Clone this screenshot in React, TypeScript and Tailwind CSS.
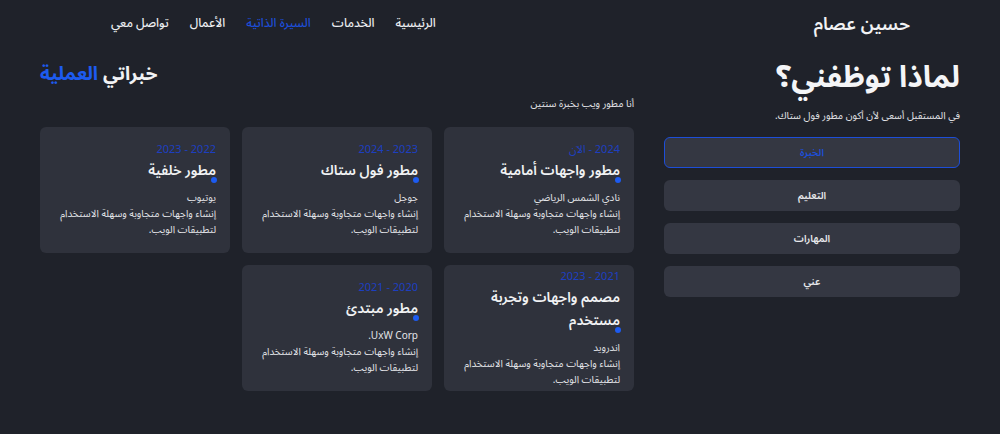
const nav = [
  { label: 'الرئيسية', active: false },
  { label: 'الخدمات', active: false },
  { label: 'السيرة الذاتية', active: true },
  { label: 'الأعمال', active: false },
  { label: 'تواصل معي', active: false },
]

const tabs = ['الخبرة', 'التعليم', 'المهارات', 'عني']

const jobs = [
  { date: '2024 - الآن', title: 'مطور واجهات أمامية', company: 'نادي الشمس الرياضي' },
  { date: '2023 - 2024', title: 'مطور فول ستاك', company: 'جوجل' },
  { date: '2022 - 2023', title: 'مطور خلفية', company: 'يوتيوب' },
  { date: '2021 - 2023', title: 'مصمم واجهات وتجربة مستخدم', company: 'اندرويد' },
  { date: '2020 - 2021', title: 'مطور مبتدئ', company: 'UxW Corp.' },
]

function JobCard({ date, title, company }: { date: string; title: string; company: string }) {
  return (
    <div className="flex h-[126px] flex-col justify-center rounded-md bg-[#2f323c] pl-[8px] pr-[14px]">
      <p className="text-[11px] leading-[12px] text-[#1d3fc0]">{date}</p>
      <h3 className="relative mt-[3px] w-fit max-w-[136px] text-[14px] font-semibold leading-[23px] text-[#f1f2f4]">
        {title}
        <span className="absolute -bottom-[2px] -right-[1px] h-[6px] w-[6px] rounded-full bg-[#1d5bf0]" />
      </h3>
      <div className="mt-[8px] text-[10px] leading-[16px] text-[#e3e4e8]">
        <p>{company}</p>
        <p>إنشاء واجهات متجاوبة وسهلة الاستخدام لتطبيقات الويب.</p>
      </div>
    </div>
  )
}

export default function App() {
  return (
    <div
      dir="rtl"
      className="min-h-screen bg-[#1f222a] text-white"
      style={{ fontFamily: '"Noto Sans", "Noto Sans Arabic", "DejaVu Sans", sans-serif' }}
    >
      <header className="flex h-[46px] items-center justify-between pl-[111px] pr-[90px]">
        <span className="text-[18px] font-semibold text-[#f1f2f4]">حسين عصام</span>
        <nav className="flex items-center gap-[21px] text-[12px] font-medium">
          {nav.map((item) => (
            <a key={item.label} className={item.active ? 'text-[#1d4ed8]' : 'text-[#eceef1]'}>
              {item.label}
            </a>
          ))}
        </nav>
      </header>

      <div className="flex gap-[30px] px-[40px] pt-[10px]">
        <aside className="w-[296px] shrink-0">
          <h2 className="text-[30px] font-bold leading-[40px] text-[#f4f5f7]">لماذا توظفني؟</h2>
          <p className="mt-[11px] text-[10px] leading-[16px] text-[#e3e4e8]">
            في المستقبل أسعى لأن أكون مطور فول ستاك.
          </p>
          <div className="mt-[14px] flex flex-col gap-[12px]">
            {tabs.map((tab, i) => (
              <button
                key={tab}
                type="button"
                className={`h-[31px] rounded-md text-[10px] font-semibold ${
                  i === 0
                    ? 'border border-[#1d4ed8] bg-[#343742] text-[#1d4ed8]'
                    : 'bg-[#343742] text-[#e8e9ec]'
                }`}
              >
                {tab}
              </button>
            ))}
          </div>
        </aside>

        <main className="flex-1">
          <h2 className="pt-[4px] text-left text-[19px] font-bold leading-[26px] text-[#f1f2f4]">
            خبراتي <span className="text-[#1d5bf0]">العملية</span>
          </h2>
          <p className="mt-[10px] text-[10px] leading-[14px] text-[#e3e4e8]">أنا مطور ويب بخبرة سنتين</p>
          <div className="mt-[17px] grid grid-cols-3 gap-[12px]">
            {jobs.map((job) => (
              <JobCard key={job.title} {...job} />
            ))}
          </div>
        </main>
      </div>
    </div>
  )
}
